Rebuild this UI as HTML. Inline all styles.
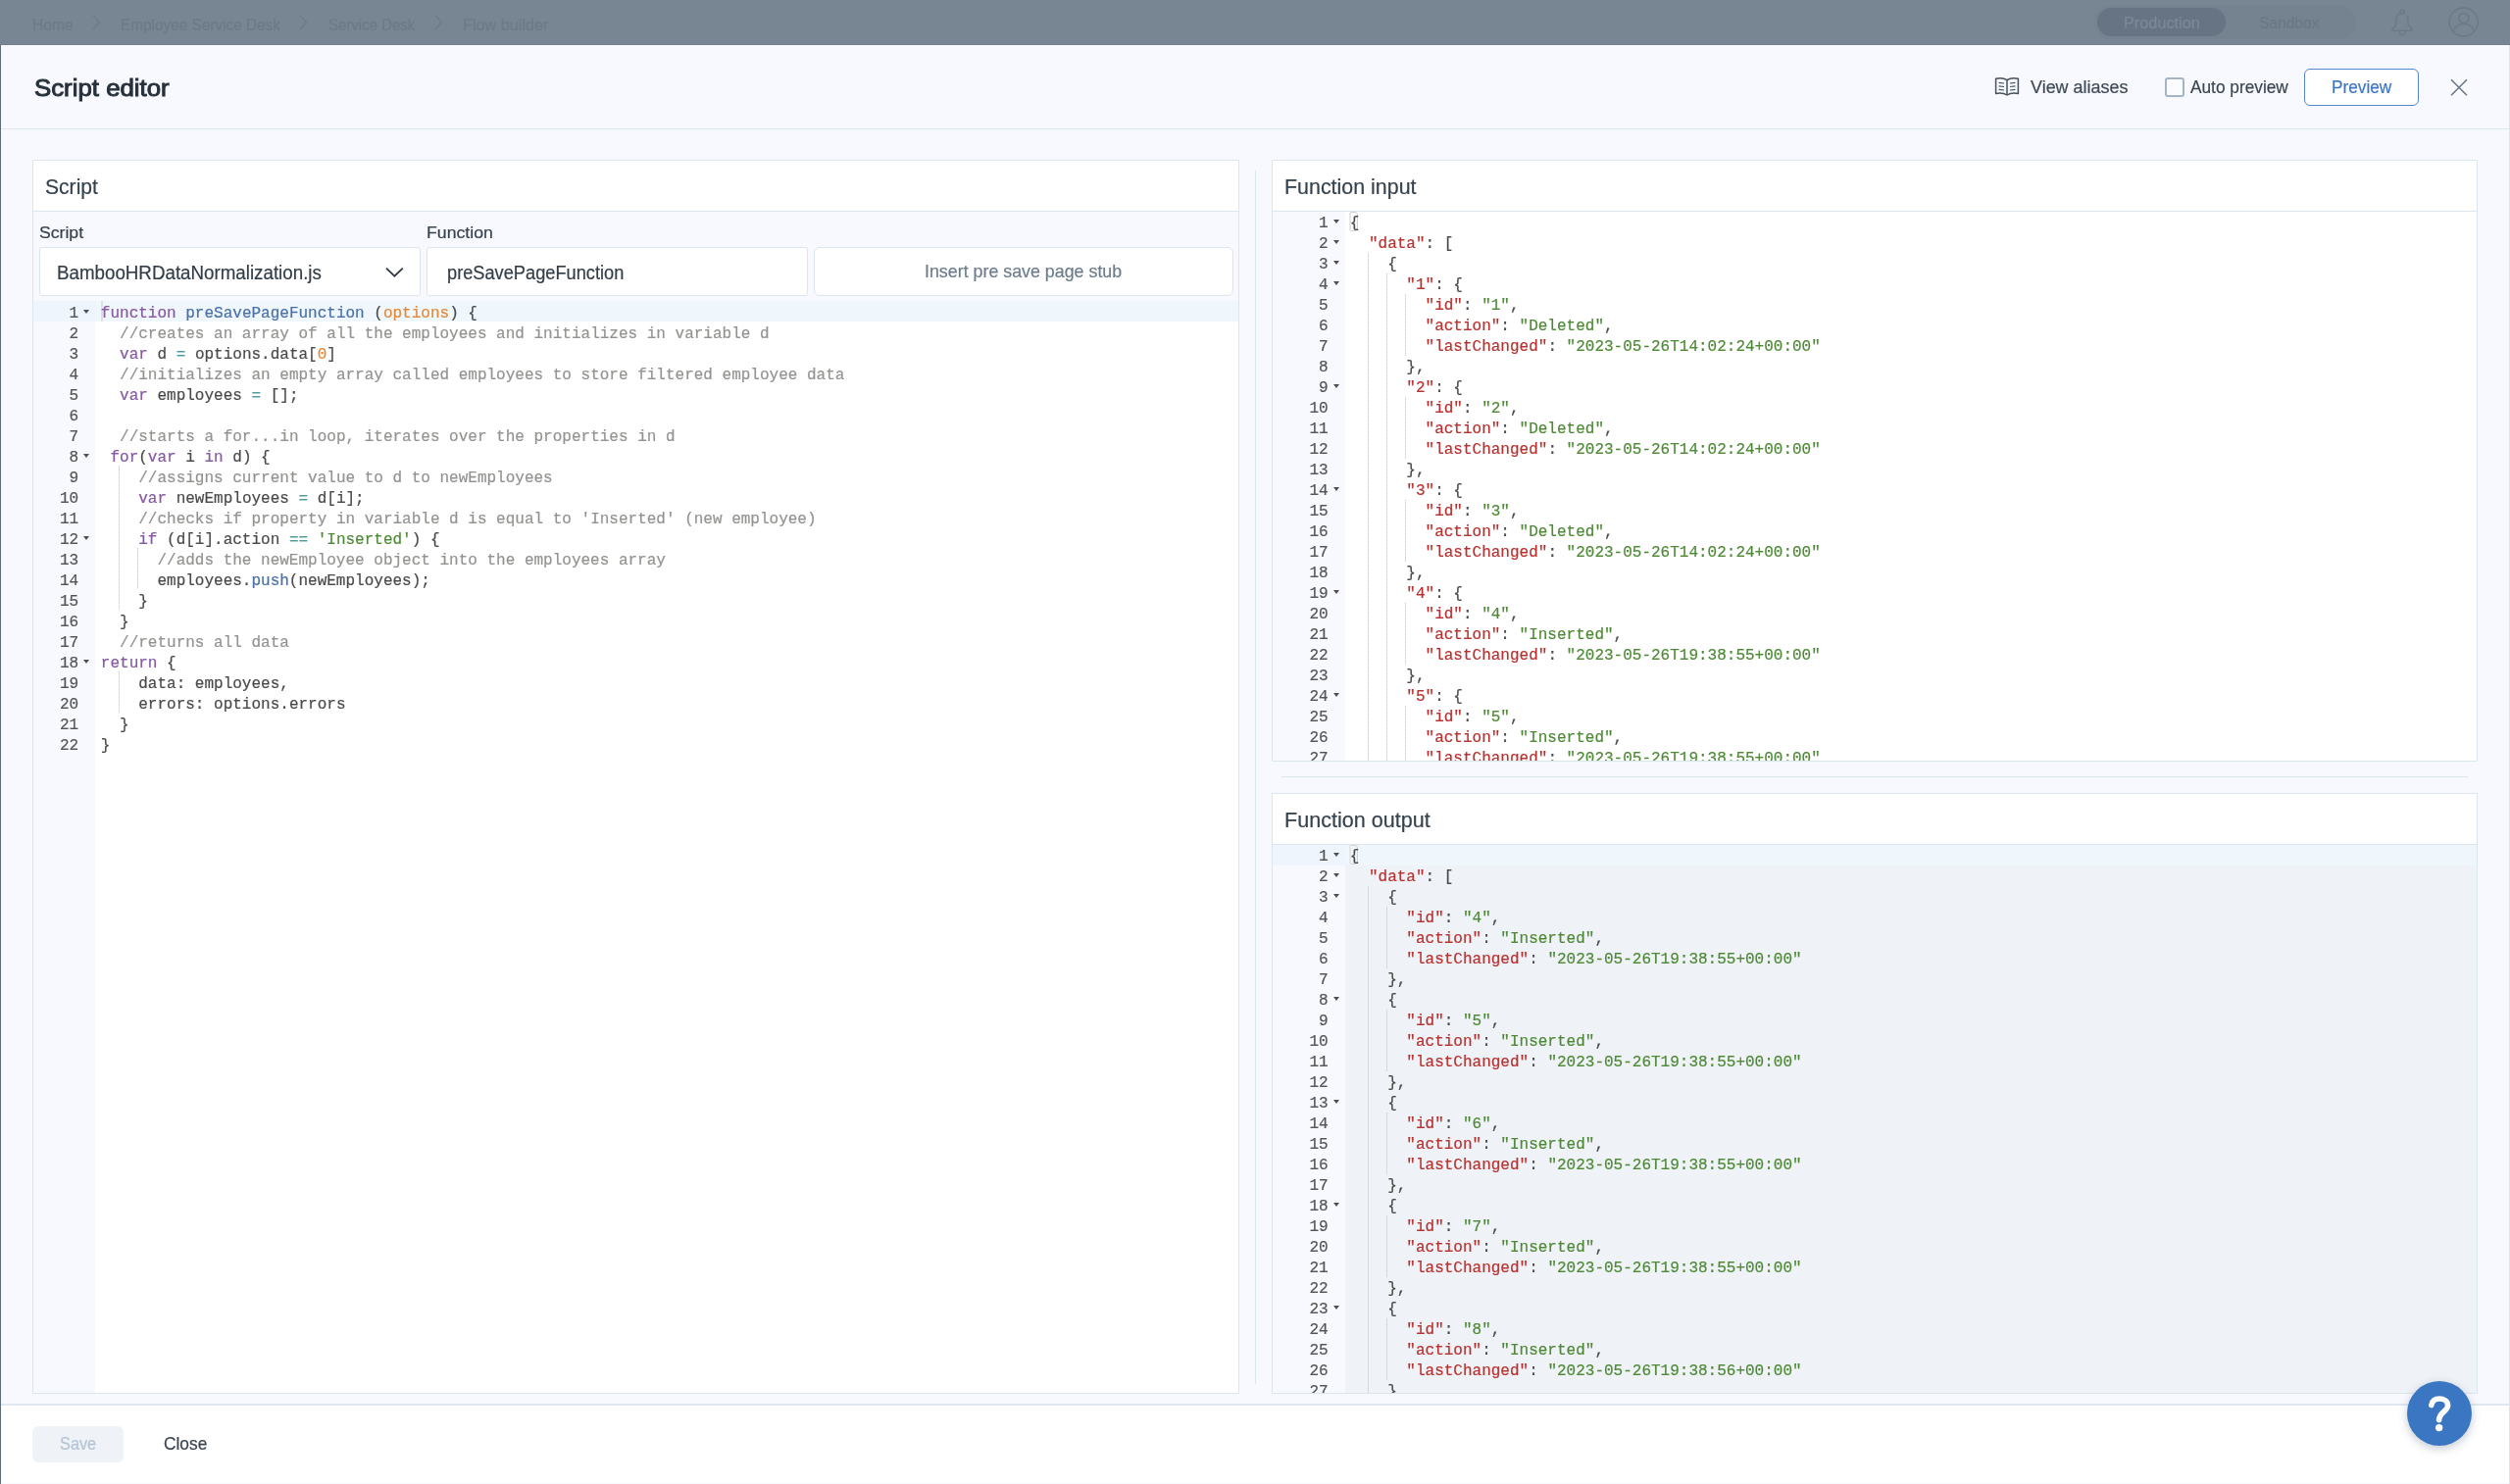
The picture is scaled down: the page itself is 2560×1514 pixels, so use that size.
<!DOCTYPE html>
<html lang="en"><head><meta charset="utf-8"><title>Script editor</title><style>
*{box-sizing:border-box;margin:0;padding:0}
html,body{width:2560px;height:1514px;overflow:hidden}
body{position:relative;background:#5f6b79;font-family:"Liberation Sans",sans-serif;color:#3a4550}
.abs,.t,.ed,.gut,.al,.ig,.n,.l,.fa,.br,.cur{position:absolute}
.t{white-space:nowrap;line-height:1;transform-origin:0 0;display:block;-webkit-text-stroke:0.2px}
#root{position:absolute;left:0;top:0;width:2560px;height:1514px;will-change:transform}
#bar{left:0;top:0;width:2560px;height:46px;background:#788592;border-bottom:1px solid #727f8c}
#modal{left:1px;top:46px;width:2559px;height:1468px;background:#f8f9fe;border-right:1px solid #dde5ee}
.hl{background:#dce6ef}
.panel{border:1px solid #dce6ef;background:#f8f9fe}
.ph{left:0;top:0;right:0;height:52px;background:#fff;border-bottom:1px solid #dce6ef}
.box{background:#fff;border:1px solid #dce6ef;border-radius:3px}
.ed{overflow:hidden;font-family:"Liberation Mono",monospace;font-size:16px;color:#4a4a49}
.gut{left:0;top:0;bottom:0;background:#f8f9fe}
.al{top:0;height:21px}
.ig{width:1px;background-image:linear-gradient(to bottom,#cbcbcb 50%,rgba(203,203,203,.3) 50%);background-size:1px 2px}
.n{left:0;height:24px;line-height:24px;text-align:right;white-space:pre;-webkit-text-stroke:0.2px;color:#555}
.l{height:24px;line-height:24px;white-space:pre;-webkit-text-stroke:0.2px}
.fa{width:0;height:0;border-left:3.9px solid transparent;border-right:3.9px solid transparent;border-top:4.7px solid #4f4f4f}
.br{width:9.6px;height:20px;border:1px solid #d0d0d0;border-radius:3px}
.cur{width:2px;height:21px;background:#e0e0e0}
.k{color:#8659a3}.f{color:#4a70aa}.p{color:#e38b3b}.c{color:#929490}.o{color:#4f9ca0}.s{color:#4e8a36}.v{color:#b8312f}
</style></head><body><div id="root">
<div id="bar" class="abs"></div>
<span class="t" style="left:33.30px;top:17.76px;font-size:15.75px;color:#6d7a87;transform:scaleX(0.9902);">Home</span>
<span class="t" style="left:123.20px;top:17.76px;font-size:15.75px;color:#6d7a87;transform:scaleX(0.9747);">Employee Service Desk</span>
<span class="t" style="left:334.70px;top:17.76px;font-size:15.75px;color:#6d7a87;transform:scaleX(0.9514);">Service Desk</span>
<span class="t" style="left:471.70px;top:17.76px;font-size:15.75px;color:#6d7a87;transform:scaleX(1.0302);">Flow builder</span>
<svg class="abs" style="left:94.4px;top:14px" width="10" height="18" viewBox="0 0 10 18"><path d="M1 1.6 L7.4 8.8 L1 16" fill="none" stroke="#6d7a87" stroke-width="1.3"/></svg>
<svg class="abs" style="left:305.0px;top:14px" width="10" height="18" viewBox="0 0 10 18"><path d="M1 1.6 L7.4 8.8 L1 16" fill="none" stroke="#6d7a87" stroke-width="1.3"/></svg>
<svg class="abs" style="left:442.5px;top:14px" width="10" height="18" viewBox="0 0 10 18"><path d="M1 1.6 L7.4 8.8 L1 16" fill="none" stroke="#6d7a87" stroke-width="1.3"/></svg>
<div class="abs" style="left:2136px;top:5px;width:267px;height:35px;border-radius:18px;background:#75828f"></div>
<div class="abs" style="left:2139px;top:8px;width:131px;height:29px;border-radius:15px;background:#667483"></div>
<span class="t" style="left:2165.90px;top:15.85px;font-size:16.00px;color:#7c8996;transform:scaleX(1.0173);">Production</span>
<span class="t" style="left:2304.40px;top:15.85px;font-size:16.00px;color:#6a7887;transform:scaleX(0.9706);">Sandbox</span>
<svg class="abs" style="left:2437px;top:8px" width="26" height="30" viewBox="0 0 26 30"><g fill="none" stroke="#6b7989" stroke-width="1.5" stroke-linecap="round"><circle cx="13" cy="4.3" r="2.1"/><path d="M11.2 5.9 C8 6.8 6.9 9.5 6.9 12 V16 C6.9 19 4 20 3 21.8 C2.5 23 3.5 23.2 4.5 23.2 H21.5 C22.8 23.2 23.5 22.8 23 21.8 C22 20 19 19 19 16 V12 C19 10.5 18.8 9.3 18.2 8.2"/><path d="M10.1 25 C10.8 27.2 12 27.7 13.1 27.7 C14.3 27.7 15.5 27.2 16.2 25"/></g></svg>
<svg class="abs" style="left:2496px;top:6px" width="34" height="34" viewBox="0 0 34 34"><g fill="none" stroke="#6b7989" stroke-width="1.5"><circle cx="16.7" cy="16.55" r="14.5"/><circle cx="16.85" cy="12.4" r="5"/><path d="M6 26 C8 21 12 18.2 16.8 18.2 C21.5 18.2 25.5 21 27.3 25.5"/></g></svg>
<div id="modal" class="abs"></div>
<div class="abs hl" style="left:1px;top:131px;width:2559px;height:1px"></div>
<span class="t" style="left:34.90px;top:78.17px;font-size:24.25px;color:#27313b;transform:scaleX(1.0644);-webkit-text-stroke:0.95px;">Script editor</span>
<svg class="abs" style="left:2034px;top:78px" width="26" height="21" viewBox="0 0 26 21"><g fill="none" stroke="#46515b" stroke-width="1.5" stroke-linejoin="round"><path d="M13 3.6 C10 1.6 5.5 1.3 1.6 2.2 V17.4 C5.5 16.6 10 16.9 13 19 C16 16.9 20.5 16.6 24.4 17.4 V2.2 C20.5 1.3 16 1.6 13 3.6 Z"/><path d="M13 3.6 V19"/></g><g stroke="#46515b" stroke-width="1.2"><path d="M4.6 6.3 L10 7"/><path d="M4.6 9.8 L10 10.5"/><path d="M4.6 13.3 L10 14"/><path d="M21.4 6.3 L16 7"/><path d="M21.4 9.8 L16 10.5"/><path d="M21.4 13.3 L16 14"/></g></svg>
<span class="t" style="left:2070.80px;top:81.08px;font-size:17.50px;color:#3f4a54;transform:scaleX(1.0253);">View aliases</span>
<div class="abs" style="left:2208px;top:79px;width:20px;height:20px;border:2px solid #a3b4c4;border-radius:3px;background:#fbfcff"></div>
<span class="t" style="left:2233.90px;top:81.47px;font-size:17.75px;color:#3a4550;transform:scaleX(0.9729);">Auto preview</span>
<div class="abs" style="left:2350px;top:70px;width:117px;height:38px;border:1.5px solid #5587cf;border-radius:6px;background:#fff"></div>
<span class="t" style="left:2377.70px;top:80.98px;font-size:17.50px;color:#3d76c6;transform:scaleX(0.9839);">Preview</span>
<svg class="abs" style="left:2498px;top:79px" width="20" height="20" viewBox="0 0 20 20"><path d="M2 2.3 L18 18.3 M18 2.3 L2 18.3" stroke="#6a7886" stroke-width="1.6" fill="none"/></svg>
<div class="abs panel" style="left:33px;top:163px;width:1231px;height:1259px"><div class="abs ph"></div></div>
<span class="t" style="left:45.90px;top:180.70px;font-size:21.50px;color:#36424e;transform:scaleX(0.9812);">Script</span>
<span class="t" style="left:40.40px;top:228.99px;font-size:17.25px;color:#36424e;transform:scaleX(1.0210);">Script</span>
<span class="t" style="left:434.80px;top:228.99px;font-size:17.25px;color:#36424e;transform:scaleX(1.0264);">Function</span>
<div class="abs box" style="left:40px;top:252px;width:389px;height:50px"></div>
<span class="t" style="left:57.70px;top:268.99px;font-size:19.50px;color:#333d47;transform:scaleX(0.9615);">BambooHRDataNormalization.js</span>
<svg class="abs" style="left:392px;top:271px" width="21" height="13" viewBox="0 0 21 13"><path d="M2 2.6 L10.4 10.6 L18.8 2.6" fill="none" stroke="#333d47" stroke-width="1.9"/></svg>
<div class="abs box" style="left:435px;top:252px;width:389px;height:50px"></div>
<span class="t" style="left:455.60px;top:268.99px;font-size:19.50px;color:#333d47;transform:scaleX(0.9344);">preSavePageFunction</span>
<div class="abs box" style="left:830px;top:252px;width:428px;height:50px;border-radius:6px"></div>
<span class="t" style="left:943.00px;top:269.17px;font-size:17.75px;color:#6c7c8c;transform:scaleX(1.0044);">Insert pre save page stub</span>
<div class="ed" style="left:34px;top:307px;width:1229px;height:1114px;background:#ffffff">
<div class="gut" style="width:63px"></div>
<div class="al" style="left:63px;right:0;background:#eff6fc"></div>
<div class="al" style="left:0;width:63px;background:#eef5fc"></div>
<div class="ig" style="left:86.60px;top:168px;height:147px"></div>
<div class="ig" style="left:86.60px;top:378px;height:42px"></div>
<div class="ig" style="left:105.80px;top:252px;height:42px"></div>
<div class="cur" style="left:68.50px;top:0"></div>
<div class="n" style="top:1px;width:46.10px">1</div>
<i class="fa" style="left:51.10px;top:9px"></i>
<div class="l" style="left:68.85px;top:1px"><span class="k">function</span> <span class="f">preSavePageFunction</span> (<span class="p">options</span>) {</div>
<div class="n" style="top:22px;width:46.10px">2</div>
<div class="l" style="left:88.05px;top:22px"><span class="c">//creates an array of all the employees and initializes in variable d</span></div>
<div class="n" style="top:43px;width:46.10px">3</div>
<div class="l" style="left:88.05px;top:43px"><span class="k">var</span> d <span class="o">=</span> options.data[<span class="p">0</span>]</div>
<div class="n" style="top:64px;width:46.10px">4</div>
<div class="l" style="left:88.05px;top:64px"><span class="c">//initializes an empty array called employees to store filtered employee data</span></div>
<div class="n" style="top:85px;width:46.10px">5</div>
<div class="l" style="left:88.05px;top:85px"><span class="k">var</span> employees <span class="o">=</span> [];</div>
<div class="n" style="top:106px;width:46.10px">6</div>
<div class="n" style="top:127px;width:46.10px">7</div>
<div class="l" style="left:88.05px;top:127px"><span class="c">//starts a for...in loop, iterates over the properties in d</span></div>
<div class="n" style="top:148px;width:46.10px">8</div>
<i class="fa" style="left:51.10px;top:156px"></i>
<div class="l" style="left:78.45px;top:148px"><span class="k">for</span>(<span class="k">var</span> i <span class="k">in</span> d) {</div>
<div class="n" style="top:169px;width:46.10px">9</div>
<div class="l" style="left:107.25px;top:169px"><span class="c">//assigns current value to d to newEmployees</span></div>
<div class="n" style="top:190px;width:46.10px">10</div>
<div class="l" style="left:107.25px;top:190px"><span class="k">var</span> newEmployees <span class="o">=</span> d[i];</div>
<div class="n" style="top:211px;width:46.10px">11</div>
<div class="l" style="left:107.25px;top:211px"><span class="c">//checks if property in variable d is equal to 'Inserted' (new employee)</span></div>
<div class="n" style="top:232px;width:46.10px">12</div>
<i class="fa" style="left:51.10px;top:240px"></i>
<div class="l" style="left:107.25px;top:232px"><span class="k">if</span> (d[i].action <span class="o">==</span> <span class="s">'Inserted'</span>) {</div>
<div class="n" style="top:253px;width:46.10px">13</div>
<div class="l" style="left:126.45px;top:253px"><span class="c">//adds the newEmployee object into the employees array</span></div>
<div class="n" style="top:274px;width:46.10px">14</div>
<div class="l" style="left:126.45px;top:274px">employees.<span class="f">push</span>(newEmployees);</div>
<div class="n" style="top:295px;width:46.10px">15</div>
<div class="l" style="left:107.25px;top:295px">}</div>
<div class="n" style="top:316px;width:46.10px">16</div>
<div class="l" style="left:88.05px;top:316px">}</div>
<div class="n" style="top:337px;width:46.10px">17</div>
<div class="l" style="left:88.05px;top:337px"><span class="c">//returns all data</span></div>
<div class="n" style="top:358px;width:46.10px">18</div>
<i class="fa" style="left:51.10px;top:366px"></i>
<div class="l" style="left:68.85px;top:358px"><span class="k">return</span> {</div>
<div class="n" style="top:379px;width:46.10px">19</div>
<div class="l" style="left:107.25px;top:379px">data: employees,</div>
<div class="n" style="top:400px;width:46.10px">20</div>
<div class="l" style="left:107.25px;top:400px">errors: options.errors</div>
<div class="n" style="top:421px;width:46.10px">21</div>
<div class="l" style="left:88.05px;top:421px">}</div>
<div class="n" style="top:442px;width:46.10px">22</div>
<div class="l" style="left:68.85px;top:442px">}</div>
</div>
<div class="abs hl" style="left:1280px;top:174px;width:1px;height:1238px"></div>
<div class="abs panel" style="left:1297px;top:163px;width:1230px;height:614px"><div class="abs ph"></div></div>
<span class="t" style="left:1309.80px;top:180.70px;font-size:21.50px;color:#36424e;transform:scaleX(0.9958);">Function input</span>
<div class="ed" style="left:1298px;top:216px;width:1228px;height:560px;background:#ffffff">
<div class="gut" style="width:73.5px"></div>
<div class="al" style="left:73.5px;right:0;background:#ffffff"></div>
<div class="al" style="left:0;width:73.5px;background:#f8f9fe"></div>
<div class="ig" style="left:96.50px;top:42px;height:525px"></div>
<div class="ig" style="left:115.70px;top:63px;height:504px"></div>
<div class="ig" style="left:134.90px;top:84px;height:63px"></div>
<div class="ig" style="left:134.90px;top:189px;height:63px"></div>
<div class="ig" style="left:134.90px;top:294px;height:63px"></div>
<div class="ig" style="left:134.90px;top:399px;height:63px"></div>
<div class="ig" style="left:134.90px;top:504px;height:63px"></div>
<div class="br" style="left:77.80px;top:0"></div>
<div class="cur" style="left:78.10px;top:0;height:20px;width:1.6px;background:#e6e6e6;border-radius:2px 0 0 2px"></div>
<div class="n" style="top:0px;width:56.60px">1</div>
<i class="fa" style="left:61.60px;top:8px"></i>
<div class="l" style="left:78.75px;top:0px">{</div>
<div class="n" style="top:21px;width:56.60px">2</div>
<i class="fa" style="left:61.60px;top:29px"></i>
<div class="l" style="left:97.95px;top:21px"><span class="v">"data"</span>: [</div>
<div class="n" style="top:42px;width:56.60px">3</div>
<i class="fa" style="left:61.60px;top:50px"></i>
<div class="l" style="left:117.15px;top:42px">{</div>
<div class="n" style="top:63px;width:56.60px">4</div>
<i class="fa" style="left:61.60px;top:71px"></i>
<div class="l" style="left:136.35px;top:63px"><span class="v">"1"</span>: {</div>
<div class="n" style="top:84px;width:56.60px">5</div>
<div class="l" style="left:155.55px;top:84px"><span class="v">"id"</span>: <span class="s">"1"</span>,</div>
<div class="n" style="top:105px;width:56.60px">6</div>
<div class="l" style="left:155.55px;top:105px"><span class="v">"action"</span>: <span class="s">"Deleted"</span>,</div>
<div class="n" style="top:126px;width:56.60px">7</div>
<div class="l" style="left:155.55px;top:126px"><span class="v">"lastChanged"</span>: <span class="s">"2023-05-26T14:02:24+00:00"</span></div>
<div class="n" style="top:147px;width:56.60px">8</div>
<div class="l" style="left:136.35px;top:147px">},</div>
<div class="n" style="top:168px;width:56.60px">9</div>
<i class="fa" style="left:61.60px;top:176px"></i>
<div class="l" style="left:136.35px;top:168px"><span class="v">"2"</span>: {</div>
<div class="n" style="top:189px;width:56.60px">10</div>
<div class="l" style="left:155.55px;top:189px"><span class="v">"id"</span>: <span class="s">"2"</span>,</div>
<div class="n" style="top:210px;width:56.60px">11</div>
<div class="l" style="left:155.55px;top:210px"><span class="v">"action"</span>: <span class="s">"Deleted"</span>,</div>
<div class="n" style="top:231px;width:56.60px">12</div>
<div class="l" style="left:155.55px;top:231px"><span class="v">"lastChanged"</span>: <span class="s">"2023-05-26T14:02:24+00:00"</span></div>
<div class="n" style="top:252px;width:56.60px">13</div>
<div class="l" style="left:136.35px;top:252px">},</div>
<div class="n" style="top:273px;width:56.60px">14</div>
<i class="fa" style="left:61.60px;top:281px"></i>
<div class="l" style="left:136.35px;top:273px"><span class="v">"3"</span>: {</div>
<div class="n" style="top:294px;width:56.60px">15</div>
<div class="l" style="left:155.55px;top:294px"><span class="v">"id"</span>: <span class="s">"3"</span>,</div>
<div class="n" style="top:315px;width:56.60px">16</div>
<div class="l" style="left:155.55px;top:315px"><span class="v">"action"</span>: <span class="s">"Deleted"</span>,</div>
<div class="n" style="top:336px;width:56.60px">17</div>
<div class="l" style="left:155.55px;top:336px"><span class="v">"lastChanged"</span>: <span class="s">"2023-05-26T14:02:24+00:00"</span></div>
<div class="n" style="top:357px;width:56.60px">18</div>
<div class="l" style="left:136.35px;top:357px">},</div>
<div class="n" style="top:378px;width:56.60px">19</div>
<i class="fa" style="left:61.60px;top:386px"></i>
<div class="l" style="left:136.35px;top:378px"><span class="v">"4"</span>: {</div>
<div class="n" style="top:399px;width:56.60px">20</div>
<div class="l" style="left:155.55px;top:399px"><span class="v">"id"</span>: <span class="s">"4"</span>,</div>
<div class="n" style="top:420px;width:56.60px">21</div>
<div class="l" style="left:155.55px;top:420px"><span class="v">"action"</span>: <span class="s">"Inserted"</span>,</div>
<div class="n" style="top:441px;width:56.60px">22</div>
<div class="l" style="left:155.55px;top:441px"><span class="v">"lastChanged"</span>: <span class="s">"2023-05-26T19:38:55+00:00"</span></div>
<div class="n" style="top:462px;width:56.60px">23</div>
<div class="l" style="left:136.35px;top:462px">},</div>
<div class="n" style="top:483px;width:56.60px">24</div>
<i class="fa" style="left:61.60px;top:491px"></i>
<div class="l" style="left:136.35px;top:483px"><span class="v">"5"</span>: {</div>
<div class="n" style="top:504px;width:56.60px">25</div>
<div class="l" style="left:155.55px;top:504px"><span class="v">"id"</span>: <span class="s">"5"</span>,</div>
<div class="n" style="top:525px;width:56.60px">26</div>
<div class="l" style="left:155.55px;top:525px"><span class="v">"action"</span>: <span class="s">"Inserted"</span>,</div>
<div class="n" style="top:546px;width:56.60px">27</div>
<div class="l" style="left:155.55px;top:546px"><span class="v">"lastChanged"</span>: <span class="s">"2023-05-26T19:38:55+00:00"</span></div>
</div>
<div class="abs hl" style="left:1307px;top:792px;width:1210px;height:1px"></div>
<div class="abs panel" style="left:1297px;top:809px;width:1230px;height:613px"><div class="abs ph"></div></div>
<span class="t" style="left:1309.80px;top:826.70px;font-size:21.50px;color:#36424e;transform:scaleX(1.0038);">Function output</span>
<div class="ed" style="left:1298px;top:862px;width:1228px;height:559px;background:#eff2f7">
<div class="gut" style="width:73.5px"></div>
<div class="al" style="left:73.5px;right:0;background:#eff6fc"></div>
<div class="al" style="left:0;width:73.5px;background:#eef5fc"></div>
<div class="ig" style="left:96.50px;top:42px;height:525px"></div>
<div class="ig" style="left:115.70px;top:63px;height:63px"></div>
<div class="ig" style="left:115.70px;top:168px;height:63px"></div>
<div class="ig" style="left:115.70px;top:273px;height:63px"></div>
<div class="ig" style="left:115.70px;top:378px;height:63px"></div>
<div class="ig" style="left:115.70px;top:483px;height:63px"></div>
<div class="br" style="left:77.80px;top:0"></div>
<div class="cur" style="left:78.10px;top:0;height:20px;width:1.6px;background:#e6e6e6;border-radius:2px 0 0 2px"></div>
<div class="n" style="top:0px;width:56.60px">1</div>
<i class="fa" style="left:61.60px;top:8px"></i>
<div class="l" style="left:78.75px;top:0px">{</div>
<div class="n" style="top:21px;width:56.60px">2</div>
<i class="fa" style="left:61.60px;top:29px"></i>
<div class="l" style="left:97.95px;top:21px"><span class="v">"data"</span>: [</div>
<div class="n" style="top:42px;width:56.60px">3</div>
<i class="fa" style="left:61.60px;top:50px"></i>
<div class="l" style="left:117.15px;top:42px">{</div>
<div class="n" style="top:63px;width:56.60px">4</div>
<div class="l" style="left:136.35px;top:63px"><span class="v">"id"</span>: <span class="s">"4"</span>,</div>
<div class="n" style="top:84px;width:56.60px">5</div>
<div class="l" style="left:136.35px;top:84px"><span class="v">"action"</span>: <span class="s">"Inserted"</span>,</div>
<div class="n" style="top:105px;width:56.60px">6</div>
<div class="l" style="left:136.35px;top:105px"><span class="v">"lastChanged"</span>: <span class="s">"2023-05-26T19:38:55+00:00"</span></div>
<div class="n" style="top:126px;width:56.60px">7</div>
<div class="l" style="left:117.15px;top:126px">},</div>
<div class="n" style="top:147px;width:56.60px">8</div>
<i class="fa" style="left:61.60px;top:155px"></i>
<div class="l" style="left:117.15px;top:147px">{</div>
<div class="n" style="top:168px;width:56.60px">9</div>
<div class="l" style="left:136.35px;top:168px"><span class="v">"id"</span>: <span class="s">"5"</span>,</div>
<div class="n" style="top:189px;width:56.60px">10</div>
<div class="l" style="left:136.35px;top:189px"><span class="v">"action"</span>: <span class="s">"Inserted"</span>,</div>
<div class="n" style="top:210px;width:56.60px">11</div>
<div class="l" style="left:136.35px;top:210px"><span class="v">"lastChanged"</span>: <span class="s">"2023-05-26T19:38:55+00:00"</span></div>
<div class="n" style="top:231px;width:56.60px">12</div>
<div class="l" style="left:117.15px;top:231px">},</div>
<div class="n" style="top:252px;width:56.60px">13</div>
<i class="fa" style="left:61.60px;top:260px"></i>
<div class="l" style="left:117.15px;top:252px">{</div>
<div class="n" style="top:273px;width:56.60px">14</div>
<div class="l" style="left:136.35px;top:273px"><span class="v">"id"</span>: <span class="s">"6"</span>,</div>
<div class="n" style="top:294px;width:56.60px">15</div>
<div class="l" style="left:136.35px;top:294px"><span class="v">"action"</span>: <span class="s">"Inserted"</span>,</div>
<div class="n" style="top:315px;width:56.60px">16</div>
<div class="l" style="left:136.35px;top:315px"><span class="v">"lastChanged"</span>: <span class="s">"2023-05-26T19:38:55+00:00"</span></div>
<div class="n" style="top:336px;width:56.60px">17</div>
<div class="l" style="left:117.15px;top:336px">},</div>
<div class="n" style="top:357px;width:56.60px">18</div>
<i class="fa" style="left:61.60px;top:365px"></i>
<div class="l" style="left:117.15px;top:357px">{</div>
<div class="n" style="top:378px;width:56.60px">19</div>
<div class="l" style="left:136.35px;top:378px"><span class="v">"id"</span>: <span class="s">"7"</span>,</div>
<div class="n" style="top:399px;width:56.60px">20</div>
<div class="l" style="left:136.35px;top:399px"><span class="v">"action"</span>: <span class="s">"Inserted"</span>,</div>
<div class="n" style="top:420px;width:56.60px">21</div>
<div class="l" style="left:136.35px;top:420px"><span class="v">"lastChanged"</span>: <span class="s">"2023-05-26T19:38:55+00:00"</span></div>
<div class="n" style="top:441px;width:56.60px">22</div>
<div class="l" style="left:117.15px;top:441px">},</div>
<div class="n" style="top:462px;width:56.60px">23</div>
<i class="fa" style="left:61.60px;top:470px"></i>
<div class="l" style="left:117.15px;top:462px">{</div>
<div class="n" style="top:483px;width:56.60px">24</div>
<div class="l" style="left:136.35px;top:483px"><span class="v">"id"</span>: <span class="s">"8"</span>,</div>
<div class="n" style="top:504px;width:56.60px">25</div>
<div class="l" style="left:136.35px;top:504px"><span class="v">"action"</span>: <span class="s">"Inserted"</span>,</div>
<div class="n" style="top:525px;width:56.60px">26</div>
<div class="l" style="left:136.35px;top:525px"><span class="v">"lastChanged"</span>: <span class="s">"2023-05-26T19:38:56+00:00"</span></div>
<div class="n" style="top:546px;width:56.60px">27</div>
<div class="l" style="left:117.15px;top:546px">}</div>
</div>
<div class="abs" style="left:1px;top:1432px;width:2558px;height:81px;background:#fff;border-top:2px solid #dfe8f1"></div>
<div class="abs" style="left:33px;top:1455px;width:93px;height:37px;border-radius:6px;background:#eff3f8"></div>
<span class="t" style="left:61.00px;top:1465.37px;font-size:17.75px;color:#b3c3d5;transform:scaleX(0.9192);">Save</span>
<span class="t" style="left:166.90px;top:1465.37px;font-size:17.75px;color:#3a4550;transform:scaleX(0.9759);">Close</span>
<div class="abs" style="left:2455px;top:1409px;width:66px;height:66px;border-radius:50%;background:#3a76c1;box-shadow:0 3px 10px rgba(40,60,90,.28)"></div>
<svg class="abs" style="left:2470px;top:1420px" width="36" height="44" viewBox="0 0 36 44"><path d="M9.8 13.6 C10.6 9 14 7 18 7 C22.4 7 26.6 9.4 26.6 14 C26.6 19.6 17.6 21 17.6 28.6" fill="none" stroke="#fff" stroke-width="5.6" stroke-linecap="round" stroke-linejoin="round"/><circle cx="17.7" cy="36.6" r="3.7" fill="#fff"/></svg>
</div></body></html>
